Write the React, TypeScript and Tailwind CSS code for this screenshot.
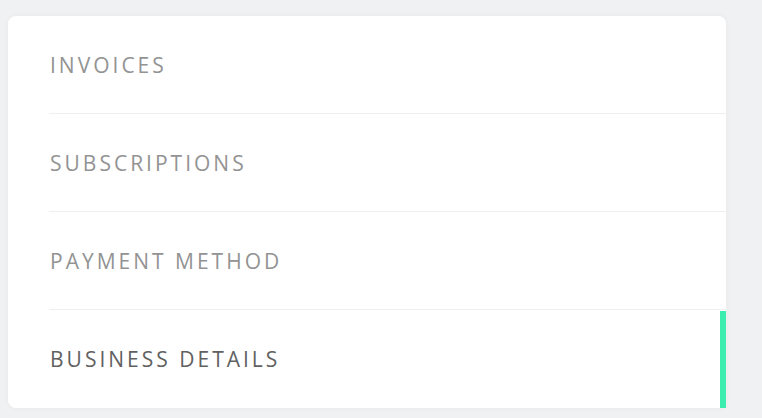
import React from "react";

const ITEMS = ["Invoices", "Subscriptions", "Payment Method", "Business Details"];

export default function App() {
  const active = 3;
  return (
    <div className="w-[762px] h-[418px] bg-[#f0f1f3] pt-4 pl-2" style={{ fontFamily: '"Open Sans", "Liberation Sans", sans-serif' }}>
      <div className="w-[718px] h-[392px] bg-white rounded-lg shadow-[0_0_6px_rgba(0,0,0,0.04)] flex flex-col">
        {ITEMS.map((label, i) => (
          <div key={label} className="relative flex-1 flex pl-[41px]">
            <div
              className={`flex-1 flex items-center pl-px pt-[2px] uppercase text-[21px] font-medium tracking-[3px] ${
                i < ITEMS.length - 1 ? "border-b border-[#efefef]" : ""
              } ${i === active ? "text-[#616161]" : "text-[#939393]"}`}
            >
              {label}
            </div>
            {i === active && <div className="absolute right-0 top-px bottom-0 w-[6px] bg-[#3beeb0]" />}
          </div>
        ))}
      </div>
    </div>
  );
}
